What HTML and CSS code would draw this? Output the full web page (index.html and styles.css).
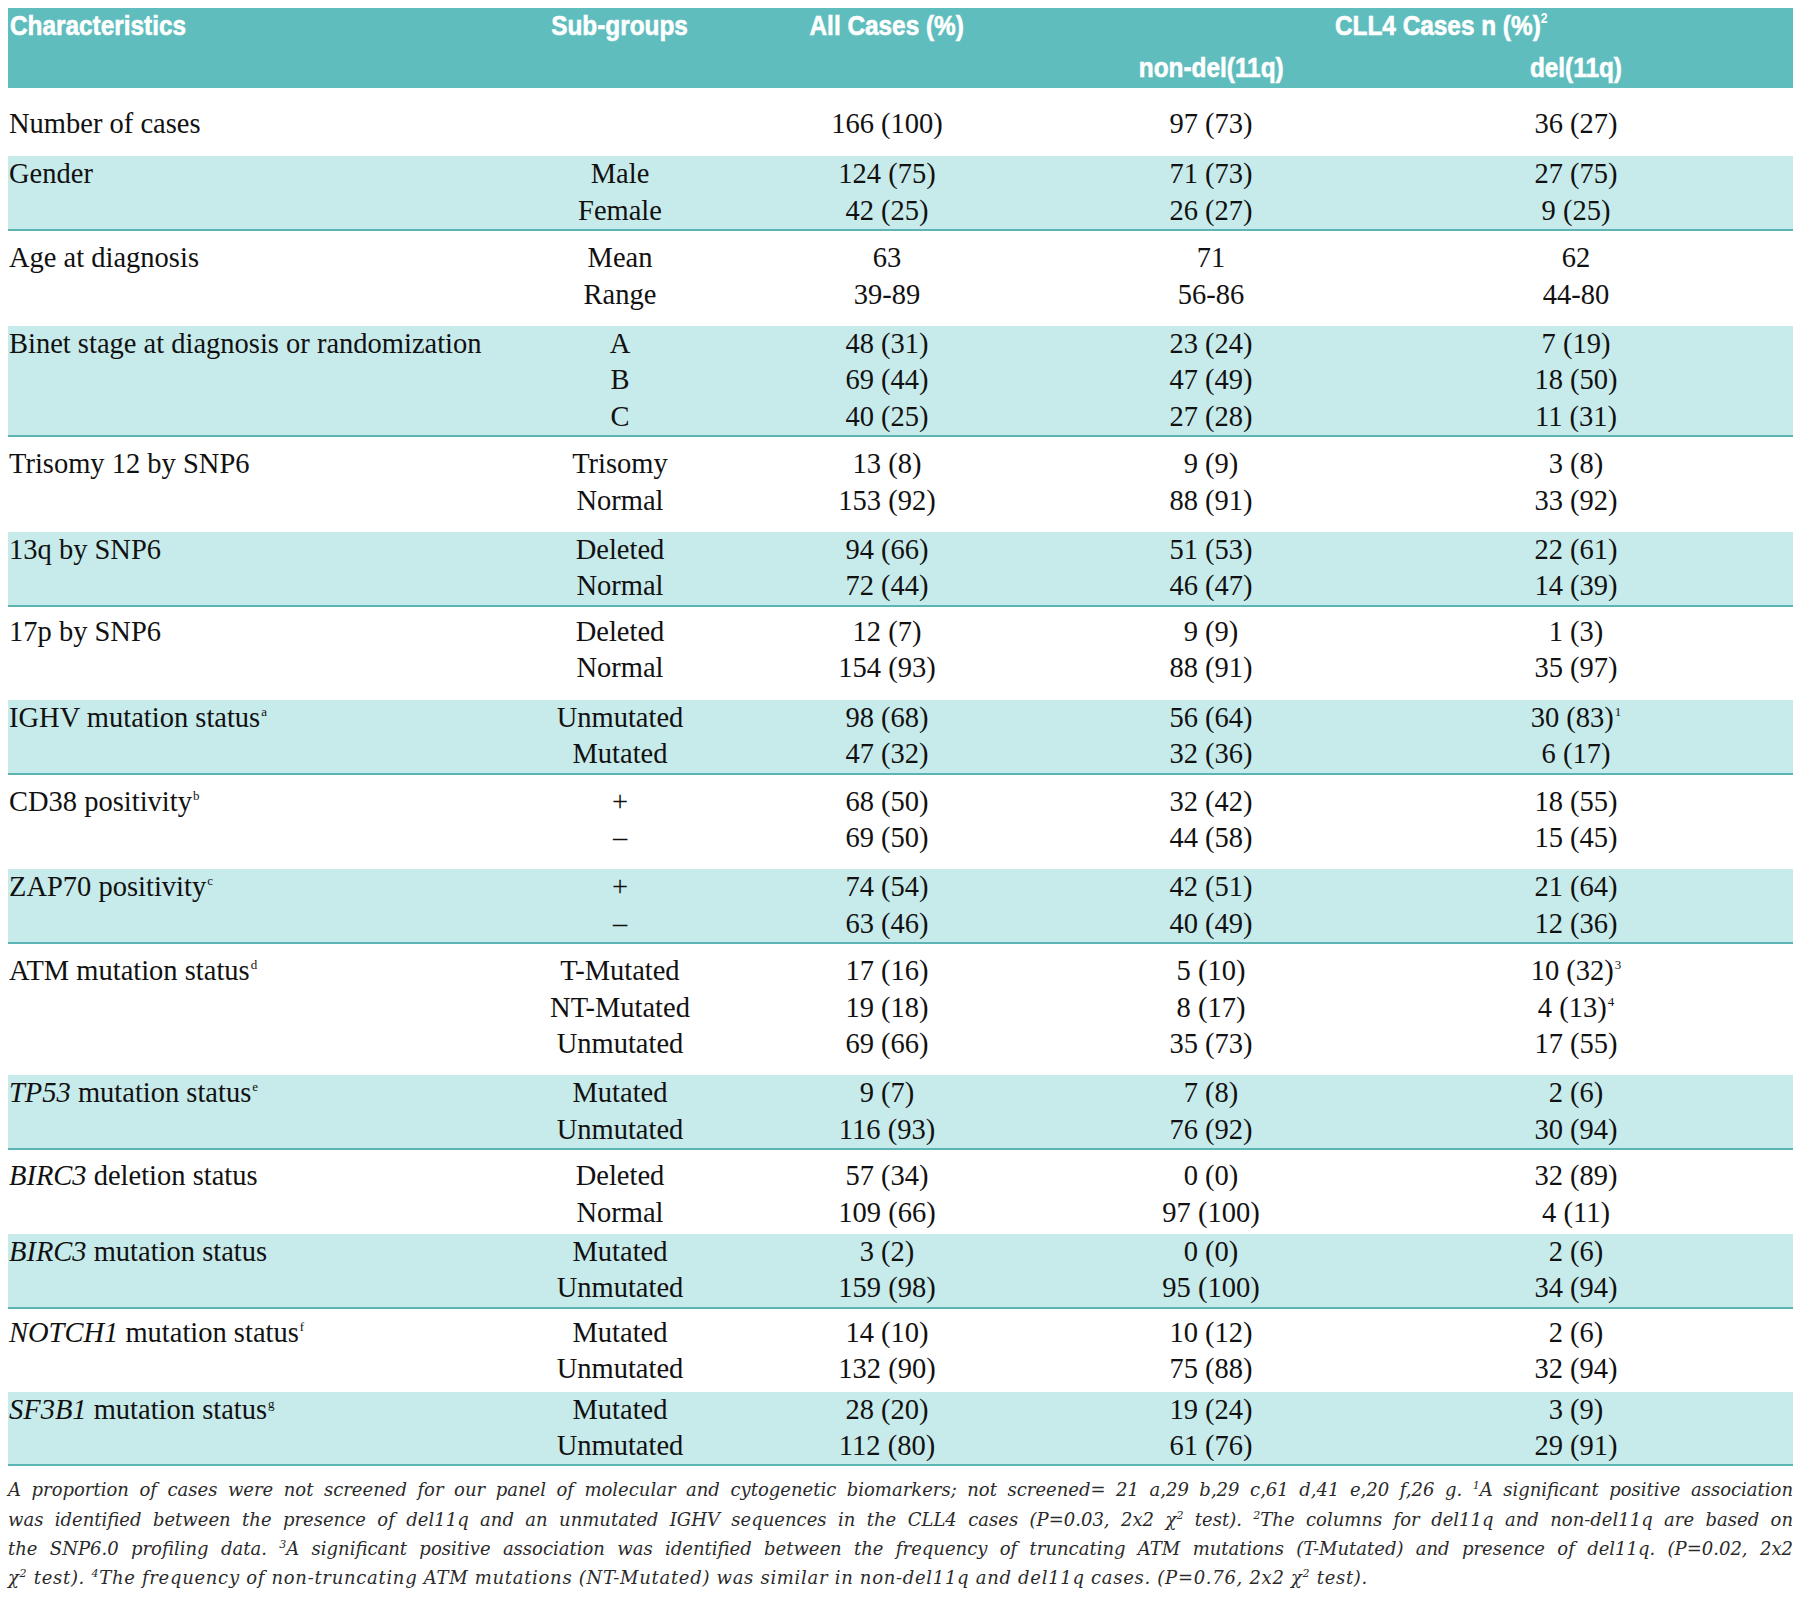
FILE: index.html
```html
<!DOCTYPE html>
<html>
<head>
<meta charset="utf-8">
<title>CLL4 characteristics</title>
<link rel="stylesheet" href="styles.css">
</head>
<body>
<table class="tbl">
<colgroup><col class="c1"><col class="c2"><col class="c3"><col class="c4"><col class="c5"></colgroup>
<thead>
<tr class="h1"><th class="left"><span class="hx hl">Characteristics</span></th><th><span class="hx">Sub-groups</span></th><th><span class="hx">All Cases (%)</span></th><th colspan="2" class="cll"><span class="hx hl">CLL4 Cases n (%)<sup class="hs">2</sup></span></th></tr>
<tr class="h2"><th></th><th></th><th></th><th><span class="hx">non-del(11q)</span></th><th class="last"><span class="hx">del(11q)</span></th></tr>
</thead>
<tbody>
<tr class="w first"><td class="left"><div>Number of cases</div></td><td></td><td><div>166 (100)</div></td><td><div>97 (73)</div></td><td class="last"><div>36 (27)</div></td></tr>
<tr class="s"><td class="left"><div>Gender</div></td><td><div>Male</div><div>Female</div></td><td><div>124 (75)</div><div>42 (25)</div></td><td><div>71 (73)</div><div>26 (27)</div></td><td class="last"><div>27 (75)</div><div>9 (25)</div></td></tr>
<tr class="w"><td class="left"><div>Age at diagnosis</div></td><td><div>Mean</div><div>Range</div></td><td><div>63</div><div>39-89</div></td><td><div>71</div><div>56-86</div></td><td class="last"><div>62</div><div>44-80</div></td></tr>
<tr class="s"><td class="left"><div>Binet stage at diagnosis or randomization</div></td><td><div>A</div><div>B</div><div>C</div></td><td><div>48 (31)</div><div>69 (44)</div><div>40 (25)</div></td><td><div>23 (24)</div><div>47 (49)</div><div>27 (28)</div></td><td class="last"><div>7 (19)</div><div>18 (50)</div><div>11 (31)</div></td></tr>
<tr class="w"><td class="left"><div>Trisomy 12 by SNP6</div></td><td><div>Trisomy</div><div>Normal</div></td><td><div>13 (8)</div><div>153 (92)</div></td><td><div>9 (9)</div><div>88 (91)</div></td><td class="last"><div>3 (8)</div><div>33 (92)</div></td></tr>
<tr class="s"><td class="left"><div>13q by SNP6</div></td><td><div>Deleted</div><div>Normal</div></td><td><div>94 (66)</div><div>72 (44)</div></td><td><div>51 (53)</div><div>46 (47)</div></td><td class="last"><div>22 (61)</div><div>14 (39)</div></td></tr>
<tr class="w w17"><td class="left"><div>17p by SNP6</div></td><td><div>Deleted</div><div>Normal</div></td><td><div>12 (7)</div><div>154 (93)</div></td><td><div>9 (9)</div><div>88 (91)</div></td><td class="last"><div>1 (3)</div><div>35 (97)</div></td></tr>
<tr class="s"><td class="left"><div>IGHV mutation status<sup class="fn">a</sup></div></td><td><div>Unmutated</div><div>Mutated</div></td><td><div>98 (68)</div><div>47 (32)</div></td><td><div>56 (64)</div><div>32 (36)</div></td><td class="last"><div>30 (83)<sup class="fn">1</sup></div><div>6 (17)</div></td></tr>
<tr class="w"><td class="left"><div>CD38 positivity<sup class="fn">b</sup></div></td><td><div>+</div><div>–</div></td><td><div>68 (50)</div><div>69 (50)</div></td><td><div>32 (42)</div><div>44 (58)</div></td><td class="last"><div>18 (55)</div><div>15 (45)</div></td></tr>
<tr class="s"><td class="left"><div>ZAP70 positivity<sup class="fn">c</sup></div></td><td><div>+</div><div>–</div></td><td><div>74 (54)</div><div>63 (46)</div></td><td><div>42 (51)</div><div>40 (49)</div></td><td class="last"><div>21 (64)</div><div>12 (36)</div></td></tr>
<tr class="w"><td class="left"><div>ATM mutation status<sup class="fn">d</sup></div></td><td><div>T-Mutated</div><div>NT-Mutated</div><div>Unmutated</div></td><td><div>17 (16)</div><div>19 (18)</div><div>69 (66)</div></td><td><div>5 (10)</div><div>8 (17)</div><div>35 (73)</div></td><td class="last"><div>10 (32)<sup class="fn">3</sup></div><div>4 (13)<sup class="fn">4</sup></div><div>17 (55)</div></td></tr>
<tr class="s"><td class="left"><div><i>TP53</i> mutation status<sup class="fn">e</sup></div></td><td><div>Mutated</div><div>Unmutated</div></td><td><div>9 (7)</div><div>116 (93)</div></td><td><div>7 (8)</div><div>76 (92)</div></td><td class="last"><div>2 (6)</div><div>30 (94)</div></td></tr>
<tr class="w tight"><td class="left"><div><i>BIRC3</i> deletion status</div></td><td><div>Deleted</div><div>Normal</div></td><td><div>57 (34)</div><div>109 (66)</div></td><td><div>0 (0)</div><div>97 (100)</div></td><td class="last"><div>32 (89)</div><div>4 (11)</div></td></tr>
<tr class="s"><td class="left"><div><i>BIRC3</i> mutation status</div></td><td><div>Mutated</div><div>Unmutated</div></td><td><div>3 (2)</div><div>159 (98)</div></td><td><div>0 (0)</div><div>95 (100)</div></td><td class="last"><div>2 (6)</div><div>34 (94)</div></td></tr>
<tr class="w tight2"><td class="left"><div><i>NOTCH1</i> mutation status<sup class="fn">f</sup></div></td><td><div>Mutated</div><div>Unmutated</div></td><td><div>14 (10)</div><div>132 (90)</div></td><td><div>10 (12)</div><div>75 (88)</div></td><td class="last"><div>2 (6)</div><div>32 (94)</div></td></tr>
<tr class="s"><td class="left"><div><i>SF3B1</i> mutation status<sup class="fn">g</sup></div></td><td><div>Mutated</div><div>Unmutated</div></td><td><div>28 (20)</div><div>112 (80)</div></td><td><div>19 (24)</div><div>61 (76)</div></td><td class="last"><div>3 (9)</div><div>29 (91)</div></td></tr>
</tbody>
</table>
<div class="foot">
<div class="jl">A proportion of cases were not screened for our panel of molecular and cytogenetic biomarkers; not screened= 21 a,29 b,29 c,61 d,41 e,20 f,26 g. <sup class="ft">1</sup>A significant positive association</div>
<div class="jl">was identified between the presence of del11q and an unmutated IGHV sequences in the CLL4 cases (P=0.03, 2x2 χ<sup class="ft">2</sup> test). <sup class="ft">2</sup>The columns for del11q and non-del11q are based on</div>
<div class="jl">the SNP6.0 profiling data. <sup class="ft">3</sup>A significant positive association was identified between the frequency of truncating ATM mutations (T-Mutated) and presence of del11q. (P=0.02, 2x2</div>
<div class="ll">χ<sup class="ft">2</sup> test). <sup class="ft">4</sup>The frequency of non-truncating ATM mutations (NT-Mutated) was similar in non-del11q and del11q cases. (P=0.76, 2x2 χ<sup class="ft">2</sup> test).</div>
</div>
</body>
</html>
```

FILE: styles.css
```css
html, body {
  margin: 0;
  padding: 0;
  background: #ffffff;
}
body {
  padding: 8px;
}
.tbl {
  width: 1785px;
  table-layout: fixed;
  border-collapse: collapse;
  border-spacing: 0;
  font-family: "Liberation Serif", "Times New Roman", serif;
  font-size: 28.5px;
  color: #111111;
}
.c1 { width: 492px; }
.c2 { width: 240px; }
.c3 { width: 294px; }
.c4 { width: 354px; }
.c5 { width: 405px; }

thead tr {
  background: #5fbdbd;
}
thead th {
  font-family: "Liberation Sans", Arial, sans-serif;
  font-weight: 700;
  font-size: 28px;
  color: #ffffff;
  height: 40px;
  line-height: 40px;
  padding: 0;
  text-align: center;
  vertical-align: middle;
  white-space: nowrap;
  -webkit-text-stroke: 0.6px #ffffff;
}
.hx {
  display: inline-block;
  transform: scaleX(0.87);
  transform-origin: center center;
}
.h1 .hx {
  transform: translateY(-2px) scaleX(0.87);
}
.hx.hl {
  transform-origin: left center;
}
thead th.left {
  text-align: left;
  padding-left: 2px;
}
thead th.cll {
  text-align: left;
  padding-left: 301px;
}
.hs {
  font-size: 14px;
  line-height: 0;
  vertical-align: 12px;
  -webkit-text-stroke: 0;
}
th.last, td.last {
  padding-right: 29px;
}

tbody td {
  padding: 0;
  line-height: 36.4px;
  text-align: center;
  vertical-align: top;
  white-space: nowrap;
}
tbody td.left {
  text-align: left;
  padding-left: 1px;
}
tr.s td {
  background: #c7eaea;
  border-bottom: 2px solid #5db4b4;
}
tr.w td {
  padding-top: 9px;
  padding-bottom: 13px;
}
tr.first td {
  padding-top: 18px;
  padding-bottom: 14px;
}
tr.w17 td {
  padding-top: 7px;
  padding-bottom: 13px;
}
tr.tight td {
  padding-top: 8px;
  padding-bottom: 3px;
}
tr.tight2 td {
  padding-top: 6px;
  padding-bottom: 4px;
}
tbody td.last {
  padding-right: 29px;
}
.fn {
  font-size: 13px;
  line-height: 0;
  vertical-align: 11px;
  margin-left: 1px;
}

.foot {
  width: 1785px;
  margin-top: 9px;
  font-family: "DejaVu Serif", "Liberation Serif", serif;
  font-style: italic;
  font-size: 18px;
  line-height: 29.3px;
  color: #2a2a2a;
}
.jl {
  text-align: justify;
  text-align-last: justify;
  white-space: nowrap;
}
.ll {
  text-align: left;
  white-space: nowrap;
  letter-spacing: 0.7px;
}
.ft {
  font-size: 11px;
  line-height: 0;
  vertical-align: 7px;
}
```
